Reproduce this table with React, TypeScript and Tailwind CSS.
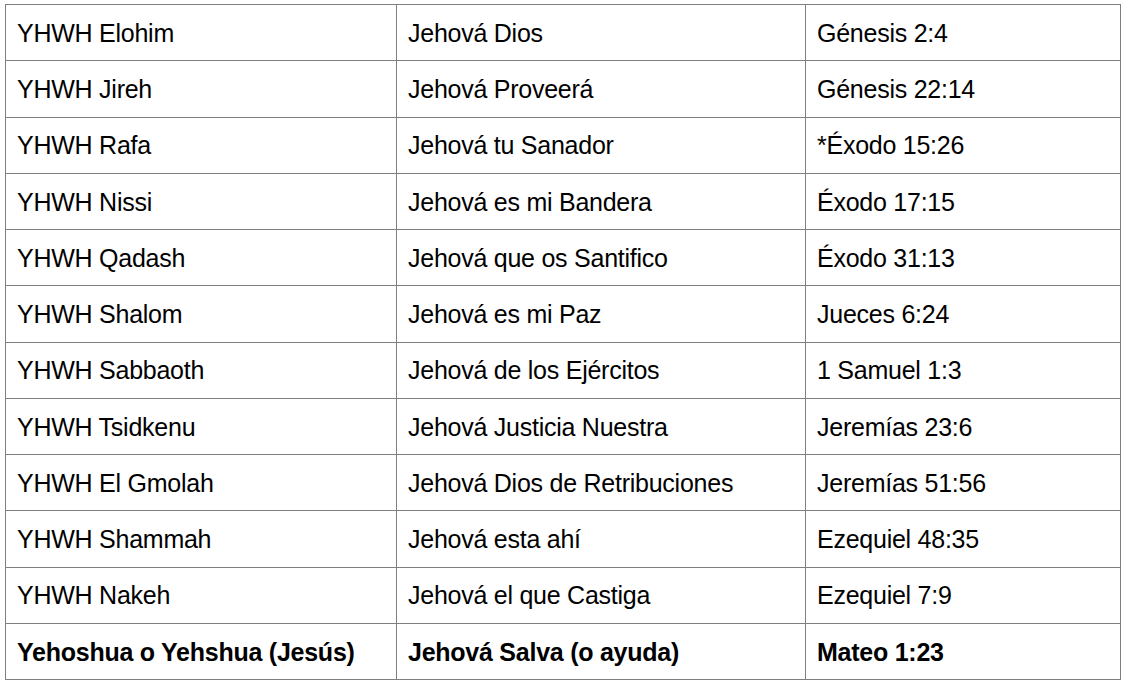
import React from 'react';

const rows: [string, string, string][] = [
  ['YHWH Elohim', 'Jehová Dios', 'Génesis 2:4'],
  ['YHWH Jireh', 'Jehová Proveerá', 'Génesis 22:14'],
  ['YHWH Rafa', 'Jehová tu Sanador', '*Éxodo 15:26'],
  ['YHWH Nissi', 'Jehová es mi Bandera', 'Éxodo 17:15'],
  ['YHWH Qadash', 'Jehová que os Santifico', 'Éxodo 31:13'],
  ['YHWH Shalom', 'Jehová es mi Paz', 'Jueces 6:24'],
  ['YHWH Sabbaoth', 'Jehová de los Ejércitos', '1 Samuel 1:3'],
  ['YHWH Tsidkenu', 'Jehová Justicia Nuestra', 'Jeremías 23:6'],
  ['YHWH El Gmolah', 'Jehová Dios de Retribuciones', 'Jeremías 51:56'],
  ['YHWH Shammah', 'Jehová esta ahí', 'Ezequiel 48:35'],
  ['YHWH Nakeh', 'Jehová el que Castiga', 'Ezequiel 7:9'],
];

const last: [string, string, string] = ['Yehoshua o Yehshua (Jesús)', 'Jehová Salva (o ayuda)', 'Mateo 1:23'];

const cell = 'border border-[#7f7f7f] px-[11px] pt-[2px] align-middle';

export default function App() {
  return (
    <div className="min-h-screen bg-white pt-[4px] pl-[5px] font-['Liberation_Sans',Arial,sans-serif] text-[25px] tracking-[-0.25px] text-black">
      <table className="border-collapse table-fixed w-[1115px]">
        <colgroup>
          <col className="w-[391px]" />
          <col className="w-[409px]" />
          <col className="w-[315px]" />
        </colgroup>
        <tbody>
          {rows.map((r) => (
            <tr key={r[0]} className="h-[56.25px]">
              <td className={cell}>{r[0]}</td>
              <td className={cell}>{r[1]}</td>
              <td className={cell}>{r[2]}</td>
            </tr>
          ))}
          <tr className="h-[56.25px] font-bold">
            <td className={cell}>{last[0]}</td>
            <td className={cell}>{last[1]}</td>
            <td className={cell}>{last[2]}</td>
          </tr>
        </tbody>
      </table>
    </div>
  );
}
